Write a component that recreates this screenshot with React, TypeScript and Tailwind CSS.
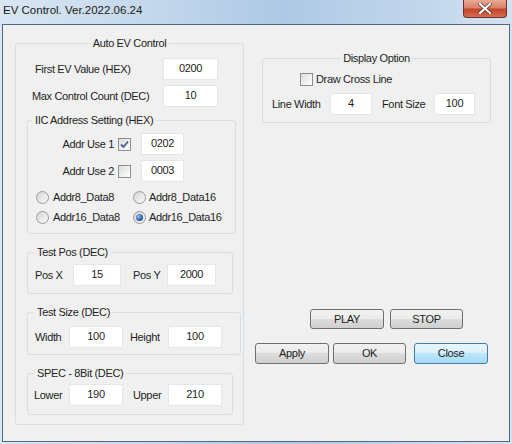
import type { ReactNode } from 'react'

const cn = (...c: (string | false | undefined)[]) => c.filter(Boolean).join(' ')

function Group({
  title,
  center,
  legendClass,
  className,
  children
}: {
  title: string
  center?: boolean
  legendClass?: string
  className?: string
  children: ReactNode
}) {
  return (
    <fieldset className={cn('rounded-[3px] border border-[#d5dfe5]', className)}>
      <legend className={cn('px-[3px] leading-[14px]', center ? 'mx-auto' : legendClass)}>
        {title}
      </legend>
      {children}
    </fieldset>
  )
}

function Field({ value, className }: { value: string; className?: string }) {
  return (
    <div
      className={cn(
        'flex h-[22px] shrink-0 items-center justify-center border border-[#e3e6ea] bg-white pb-[1px]',
        className
      )}
    >
      {value}
    </div>
  )
}

function Check({ checked }: { checked?: boolean }) {
  return (
    <div className="flex size-[13px] shrink-0 items-center justify-center border border-[#8e8f8f] bg-[linear-gradient(135deg,#dcdcdc,#ffffff)]">
      {checked && (
        <svg width="9" height="9" viewBox="0 0 9 9">
          <path d="M1 4.5 L3.5 7 L8 1.5" fill="none" stroke="#4a5f97" strokeWidth="1.8" />
        </svg>
      )}
    </div>
  )
}

function Radio({ checked }: { checked?: boolean }) {
  return (
    <div className="flex size-[13px] shrink-0 items-center justify-center rounded-full border border-[#9a9a9a] bg-[linear-gradient(135deg,#d4d4d4,#fafafa)]">
      {checked && (
        <div className="size-[7px] rounded-full bg-[radial-gradient(circle_at_35%_35%,#8fc1f0,#1f4f9a_70%)]" />
      )}
    </div>
  )
}

function Button({ label, primary, className }: { label: string; primary?: boolean; className?: string }) {
  return (
    <div
      className={cn(
        'flex shrink-0 items-center justify-center rounded-[3px] border',
        primary
          ? 'border-[#3c7fb1] bg-[linear-gradient(#eaf6fd,#d9f0fc_50%,#bee6fd_50%,#a7d9f5)]'
          : 'border-[#707070] bg-[linear-gradient(#f2f2f2,#ebebeb_50%,#dddddd_50%,#cfcfcf)]',
        className
      )}
    >
      {label}
    </div>
  )
}

export default function App() {
  return (
    <div className="flex h-[444px] w-[512px] flex-col overflow-hidden bg-[linear-gradient(90deg,#d9e6f3,#c3d7ec_30%,#aec9e6_55%,#c0d5eb_80%,#d3e2f1)] font-['Liberation_Sans',Arial,sans-serif] text-[11px] tracking-[-0.35px] text-[#1e1e1e]">
      {/* title bar */}
      <div className="flex h-[24px] shrink-0 items-start justify-between">
        <span className="ml-[3px] mt-[3px] text-[11.5px] leading-[14px] tracking-normal text-[#1a1a1a]">
          EV Control. Ver.2022.06.24
        </span>
        <div className="mr-[5px] flex h-[18px] w-[44px] items-center justify-center rounded-b-[4px] border border-t-0 border-[#6e3127] bg-[linear-gradient(#e9a999,#d98068_45%,#c4452a_55%,#d66d52)]">
          <svg width="14" height="11" viewBox="0 0 14 11">
            <path d="M2 1 L12 10 M12 1 L2 10" stroke="#5a2a22" strokeWidth="3.6" strokeLinecap="square" />
            <path d="M2 1 L12 10 M12 1 L2 10" stroke="#ffffff" strokeWidth="2.2" strokeLinecap="square" />
          </svg>
        </div>
      </div>

      {/* client area */}
      <div className="ml-[2px] flex h-[418px] w-[508px] shrink-0 border border-[#56687d] bg-[#f0f0f0]">
        {/* left column */}
        <Group title="Auto EV Control" center className="ml-[12px] mt-[11px] h-fit w-[229px] shrink-0">
          <div className="pb-[9px] pl-[11px] pt-[8px]">
            <div className="flex h-[22px] items-center justify-between pr-[25px]">
              <span className="ml-[8px]">First EV Value (HEX)</span>
              <Field value="0200" className="w-[55px]" />
            </div>
            <div className="mt-[5px] flex h-[22px] items-center justify-between pr-[25px]">
              <span className="ml-[5px]">Max Control Count (DEC)</span>
              <Field value="10" className="w-[55px]" />
            </div>

            <Group title="IIC Address Setting (HEX)" legendClass="ml-[4px]" className="mt-[6px] w-[209px]">
              <div className="pb-[7px] pt-[6px]">
                <div className="flex h-[22px] items-center">
                  <span className="w-[86px] text-right">Addr Use 1</span>
                  <div className="ml-[4px]">
                    <Check checked />
                  </div>
                  <Field value="0202" className="ml-[10px] w-[43px]" />
                </div>
                <div className="mt-[5px] flex h-[22px] items-center">
                  <span className="w-[86px] text-right">Addr Use 2</span>
                  <div className="ml-[4px]">
                    <Check />
                  </div>
                  <Field value="0003" className="ml-[10px] w-[43px]" />
                </div>
                <div className="mt-[6px] flex h-[18px] items-center">
                  <div className="flex w-[105px] items-center pl-[8px]">
                    <Radio />
                    <span className="ml-[4px]">Addr8_Data8</span>
                  </div>
                  <Radio />
                  <span className="ml-[3px]">Addr8_Data16</span>
                </div>
                <div className="mt-[2px] flex h-[18px] items-center">
                  <div className="flex w-[105px] items-center pl-[8px]">
                    <Radio />
                    <span className="ml-[4px]">Addr16_Data8</span>
                  </div>
                  <Radio checked />
                  <span className="ml-[3px]">Addr16_Data16</span>
                </div>
              </div>
            </Group>

            <Group title="Test Pos (DEC)" legendClass="ml-[6px]" className="mt-[11px] w-[206px]">
              <div className="mb-[7px] mt-[5px] flex h-[22px] items-center">
                <span className="w-[45px] pl-[7px]">Pos X</span>
                <Field value="15" className="w-[48px]" />
                <span className="w-[46px] pl-[12px]">Pos Y</span>
                <Field value="2000" className="w-[49px]" />
              </div>
            </Group>

            <Group title="Test Size (DEC)" legendClass="ml-[6px]" className="mt-[11px] w-[214px]">
              <div className="mb-[6px] mt-[7px] flex h-[22px] items-center">
                <span className="w-[41px] pl-[7px]">Width</span>
                <Field value="100" className="w-[54px]" />
                <span className="w-[45px] pl-[7px]">Height</span>
                <Field value="100" className="w-[54px]" />
              </div>
            </Group>

            <Group title="SPEC - 8Bit (DEC)" legendClass="ml-[6px]" className="mt-[11px] w-[206px]">
              <div className="mb-[8px] mt-[4px] flex h-[22px] items-center">
                <span className="w-[41px] pl-[6px]">Lower</span>
                <Field value="190" className="w-[54px]" />
                <span className="w-[45px] pl-[10px]">Upper</span>
                <Field value="210" className="w-[54px]" />
              </div>
            </Group>
          </div>
        </Group>

        {/* right column */}
        <div className="ml-[11px] mt-[26px] flex flex-col">
          <Group title="Display Option" center className="ml-[7px] w-[229px]">
            <div className="pb-[7px] pt-[5px]">
              <div className="flex h-[18px] items-center pl-[37px]">
                <Check />
                <span className="ml-[3px]">Draw Cross Line</span>
              </div>
              <div className="mt-[5px] flex h-[22px] items-center">
                <span className="w-[67px] pl-[9px]">Line Width</span>
                <Field value="4" className="w-[42px]" />
                <span className="w-[62px] pl-[10px]">Font Size</span>
                <Field value="100" className="w-[41px]" />
              </div>
            </div>
          </Group>

          <div className="mt-[186px] flex gap-[6px] pl-[55px]">
            <Button label="PLAY" className="h-[20px] w-[74px]" />
            <Button label="STOP" className="h-[20px] w-[73px]" />
          </div>
          <div className="mt-[14px] flex">
            <Button label="Apply" className="h-[21px] w-[74px]" />
            <Button label="OK" className="ml-[4px] h-[21px] w-[73px]" />
            <Button label="Close" primary className="ml-[8px] h-[21px] w-[74px]" />
          </div>
        </div>
      </div>
    </div>
  )
}
